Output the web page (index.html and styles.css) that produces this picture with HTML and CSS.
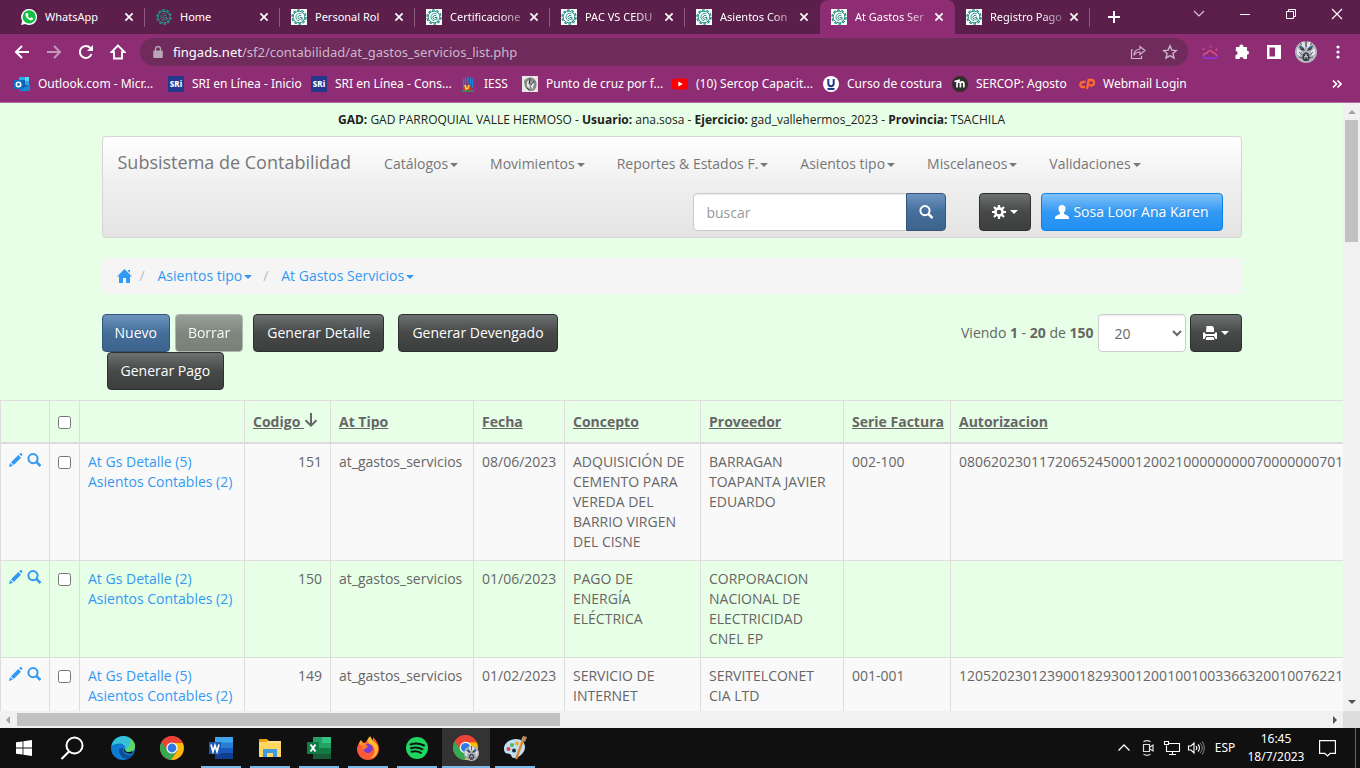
FILE: index.html
```html
<!DOCTYPE html>
<html lang="es">
<head>
<meta charset="utf-8">
<title>At Gastos Servicios</title>
<link rel="stylesheet" href="styles.css">
</head>
<body>
<svg class="defs" aria-hidden="true">
  <symbol id="gear" viewBox="0 0 16 16">
    <g fill="none" stroke="#2a9287">
      <circle cx="8" cy="8" r="7" stroke-width="1.500" stroke-dasharray="2.800 1.600"/>
      <circle cx="8" cy="8" r="5.800" stroke-width="1"/>
      <path d="M10.600 4.800C8 3.600 5.400 5 5 7.400s1.200 4.200 3.200 4.200M10.500 7a2 2 0 1 0 .2 2.400M8.600 8.500h2.400v3.200" stroke-width="1"/>
    </g>
  </symbol>
  <symbol id="x" viewBox="0 0 10 10"><path d="M1.400 1.400l7.200 7.200M8.600 1.400L1.400 8.600" stroke="currentColor" stroke-width="1.700"/></symbol>
  <symbol id="pencil" viewBox="0 0 14 14"><path fill="currentColor" d="M0 14l1.200-4 2.800 2.800zM2 9.200L9.300 2l2.700 2.700L4.800 12zM10 1.300L11 .4c.7-.6 1.200-.4 1.800.2s.9 1.300.3 1.900l-.5.6z"/></symbol>
  <symbol id="lens" viewBox="0 0 14 14"><circle cx="6" cy="5.600" r="4.600" fill="none" stroke="currentColor" stroke-width="2"/><path d="M9.300 8.800l4.200 4.200" stroke="currentColor" stroke-width="2.600"/></symbol>
  <symbol id="down" viewBox="0 0 14 14"><path d="M7 0v12M1.500 7.200L7 12.600l5.500-5.400" fill="none" stroke="currentColor" stroke-width="2"/></symbol>
  <symbol id="ball" viewBox="0 0 24 24">
    <circle cx="12" cy="12" r="12" fill="#ea4335"/>
    <path fill="#34a853" d="M1.600 6A12 12 0 0 0 11 24l6-9z"/><path fill="#fbbc05" d="M11 24A12 12 0 0 0 22.700 7H12l5.500 8z"/>
    <path fill="#ea4335" d="M1.600 6A12 12 0 0 1 22.700 7H12L7 14z"/>
    <circle cx="12" cy="12" r="5.600" fill="#fff"/><circle cx="12" cy="12" r="4.400" fill="#3178e8"/>
  </symbol>
  <symbol id="avatar" viewBox="0 0 22 22">
    <circle cx="11" cy="11" r="11" fill="#b4b7be"/>
    <path fill="#e3e5e9" d="M2 7l4 3-1 5-3-2zM20 7l-4 3 1 5 3-2zM7 1l3 1v5L7 5zM15 1l-3 1v5l3-2z"/>
    <path fill="#3a3d46" d="M4 5l4.500 2 1.500 3-4-1zM18 5l-4.500 2-1.500 3 4-1zM8 13l3-2 3 2 1 4-2 3H9l-2-3zM10.500 0h1v6h-1z"/>
    <path fill="#2f6fa5" d="M4 4l4 2-1 2zM18 4l-4 2 1 2z"/>
    <path d="M4 11l3 3M18 11l-3 3M4 16l3 1M18 16l-3 1M5 2l2 2M17 2l-2 2" stroke="#60646f"/><path d="M9.500 18l1.500-5 1.500 5M9 15.500h4" fill="none" stroke="#ccc" stroke-width=".8"/>
  </symbol>
</svg>

<header class="browser">
  <div class="tabstrip">
    <div class="tab"><svg class="fav" viewBox="0 0 16 16"><path fill="#fff" d="M0 16l1.200-4A8 8 0 1 1 4.300 15z"/><circle cx="8.200" cy="7.900" r="6.600" fill="#12c143"/><path fill="#fff" d="M5.500 4l1.300.1.700 1.900-.7.900c.6 1.100 1.300 1.800 2.500 2.400l.9-1 1.900.9c0 1.500-1.200 2.200-2.400 2-2.600-.5-4.900-2.900-5.200-5 0-1 .4-1.800 1-2.200z"/></svg><span class="tab-name">WhatsApp</span><button class="tab-x" aria-label="Cerrar"><svg><use href="#x"/></svg></button></div>
    <div class="tab"><svg class="fav"><use href="#gear"/></svg><span class="tab-name">Home</span><button class="tab-x" aria-label="Cerrar"><svg><use href="#x"/></svg></button></div>
    <div class="tab"><svg class="fav lit"><use href="#gear"/></svg><span class="tab-name">Personal Rol</span><button class="tab-x" aria-label="Cerrar"><svg><use href="#x"/></svg></button></div>
    <div class="tab"><svg class="fav lit"><use href="#gear"/></svg><span class="tab-name fade">Certificacione</span><button class="tab-x" aria-label="Cerrar"><svg><use href="#x"/></svg></button></div>
    <div class="tab"><svg class="fav lit"><use href="#gear"/></svg><span class="tab-name fade">PAC VS CEDU</span><button class="tab-x" aria-label="Cerrar"><svg><use href="#x"/></svg></button></div>
    <div class="tab last"><svg class="fav lit"><use href="#gear"/></svg><span class="tab-name fade">Asientos Con</span><button class="tab-x" aria-label="Cerrar"><svg><use href="#x"/></svg></button></div>
    <div class="tab active"><svg class="fav lit"><use href="#gear"/></svg><span class="tab-name fade">At Gastos Ser</span><button class="tab-x" aria-label="Cerrar"><svg><use href="#x"/></svg></button></div>
    <div class="tab"><svg class="fav lit"><use href="#gear"/></svg><span class="tab-name fade">Registro Pago</span><button class="tab-x" aria-label="Cerrar"><svg><use href="#x"/></svg></button></div>
    <button class="newtab" aria-label="Nueva pestaña"><svg viewBox="0 0 12 12"><path d="M6 0v12M0 6h12" stroke="#fff" stroke-width="2"/></svg></button>
    <div class="winctl">
      <button aria-label="Buscar pestañas"><svg viewBox="0 0 12 12"><path d="M1 3l5 5 5-5" fill="none" stroke="#d9c6d5" stroke-width="1.200"/></svg></button>
      <button aria-label="Minimizar"><svg viewBox="0 0 12 12"><path d="M1 6.500h10" stroke="#fff"/></svg></button>
      <button aria-label="Restaurar"><svg viewBox="0 0 12 12"><path d="M1.500 3.500h7v7h-7zM3.500 3.500v-2h7v7h-2" fill="none" stroke="#fff"/></svg></button>
      <button aria-label="Cerrar ventana"><svg viewBox="0 0 12 12"><path d="M1 1l10 10M11 1L1 11" stroke="#fff" stroke-width="1.100"/></svg></button>
    </div>
  </div>
  <div class="toolbar">
    <button aria-label="Atrás"><svg viewBox="0 0 16 16"><path d="M15 8H2M8 2L2 8l6 6" fill="none" stroke="#fff" stroke-width="2"/></svg></button>
    <button class="dim" aria-label="Adelante"><svg viewBox="0 0 16 16"><path d="M1 8h13M8 2l6 6-6 6" fill="none" stroke="#fff" stroke-width="2"/></svg></button>
    <button aria-label="Recargar"><svg viewBox="0 0 16 16"><path d="M13.500 10A6 6 0 1 1 12.400 4" fill="none" stroke="#fff" stroke-width="2"/><path fill="#fff" d="M15 1v6H9z"/></svg></button>
    <button aria-label="Inicio"><svg viewBox="0 0 16 16"><path d="M8 1.500L1.500 8H4v6.500h8V8h2.500z" fill="none" stroke="#fff" stroke-width="1.900"/></svg></button>
    <div class="omnibox">
      <svg class="lock" viewBox="0 0 10 12"><path fill="#b9a6b6" d="M1 4.500h8a.8.800 0 0 1 .8.800V11a1 1 0 0 1-1 1H1.200a1 1 0 0 1-1-1V5.300A.8.800 0 0 1 1 4.500z"/><path d="M2.500 5V3a2.500 2.500 0 0 1 5 0v2" fill="none" stroke="#b9a6b6" stroke-width="1.400"/></svg>
      <span class="url"><b>fingads.net</b>/sf2/contabilidad/at_gastos_servicios_list.php</span>
      <button aria-label="Compartir"><svg viewBox="0 0 16 16"><path d="M3 6H1.500v8.500h10V12M10 2.500L15 6.500l-5 4V8C7 8 5 9 4 11.500 4 8 6 5.300 10 5z" fill="none" stroke="#cdb6ca" stroke-width="1.200"/></svg></button>
      <button aria-label="Favorito"><svg viewBox="0 0 16 16"><path d="M8 1.800l1.800 4.300 4.600.4-3.500 3 1.100 4.500-4-2.400L4 14l1.100-4.500-3.500-3 4.600-.4z" fill="none" stroke="#cdb6ca" stroke-width="1.400"/></svg></button>
    </div>
    <button aria-label="Extensión"><svg viewBox="0 0 16 16"><path d="M1.500 12c0-2 1.500-3 4-3 .5-3 4-3 5-.5 1.500-.3 2.500.5 2.700 1.700 1 .3 1.600 1 1.500 1.800" fill="none" stroke="#e8508c" stroke-width="1.300"/><path d="M1.500 11.500c-.3 1.500.5 2.700 1.800 2.700h9.900c1.200 0 1.900-1.200 1.500-2.500" fill="none" stroke="#8b35e6" stroke-width="1.600"/><circle cx="8.500" cy="2.500" r="1.300" fill="none" stroke="#b04878"/><circle cx="1.500" cy="5" r="1.100" fill="#d14b86"/><circle cx="14.500" cy="5.500" r="1.100" fill="#e0508a"/></svg></button>
    <button aria-label="Extensiones"><svg viewBox="0 0 16 16"><path fill="#fff" d="M2 3h3.500a2 2 0 1 1 3.800 0H13v3.800a2 2 0 1 1 0 4V15H9.500a2 2 0 0 0-4 0H1.500v-4a2 2 0 0 0 .2-4z"/></svg></button>
    <button aria-label="Panel lateral"><svg viewBox="0 0 16 16"><path fill="#fff" fill-rule="evenodd" d="M1 1h14v14H1zM3.500 3.500v9H9v-9z"/></svg></button>
    <button class="profile" aria-label="Perfil"><svg><use href="#avatar"/></svg></button>
    <button aria-label="Menú"><svg viewBox="0 0 16 16"><g fill="#fff"><circle cx="8" cy="3" r="1.600"/><circle cx="8" cy="8" r="1.600"/><circle cx="8" cy="13" r="1.600"/></g></svg></button>
  </div>
  <nav class="bookmarks">
    <a href="#" class="w154"><svg viewBox="0 0 16 16"><path fill="#28a8ea" d="M5 1h10v8H5z"/><path fill="#0f5ea8" d="M5 4h6v8H5z"/><path fill="#50d9ff" d="M11 1h4v4h-4z"/><path fill="#1588d8" d="M4 15l12-7v6a1 1 0 0 1-1 1z"/><path fill="#0a6fc7" d="M0 4h9v9H0z"/><circle cx="4.500" cy="8.500" r="2.200" fill="none" stroke="#fff" stroke-width="1.600"/></svg>Outlook.com - Micr...</a>
    <a href="#" class="w143"><span class="sri">SRi</span>SRI en Línea - Inicio</a>
    <a href="#" class="w149"><span class="sri">SRi</span>SRI en Línea - Cons...</a>
    <a href="#" class="w62"><svg viewBox="0 0 16 16"><path d="M3.500 3v9M5.500 1.500V9M8 .5V8M10.500 1.500V9M12.500 3v9" stroke="#1786d8" stroke-width="1.300"/><path d="M2 15h12" stroke="#18a34a" stroke-width="1.500"/><path d="M5 9l1.500 5M9 9l-1 4" stroke="#f6d11c" stroke-width="2"/><path d="M10 11v4M4 12v3" stroke="#e0343f" stroke-width="1.600"/></svg>IESS</a>
    <a href="#" class="w150"><svg viewBox="0 0 16 16"><path fill="#e9e9e4" d="M0 0h16v16H0z"/><path fill="#888" d="M2 5c2-3 7-5 10-2 3 2 3 6 2 9l-3 3H7L3 11z"/><path fill="#eee" d="M5 6l3-3-1 4 1 6-3-3zM10 5l2 3-2 6-1-5z"/><path d="M8 2l-1 6M12 5l-3 4M5 12l2 2" stroke="#333"/></svg>Punto de cruz por f...</a>
    <a href="#" class="w151"><svg viewBox="0 0 16 16"><rect y="2.500" width="16" height="11" rx="2.500" fill="#f00"/><path fill="#fff" d="M6.300 5.500l4.500 2.500-4.500 2.500z"/></svg>(10) Sercop Capacit...</a>
    <a href="#" class="w129"><svg viewBox="0 0 16 16"><circle cx="8" cy="8" r="8" fill="#fff"/><path d="M5.300 3v4.500a2.700 2.700 0 0 0 5.400 0V3M4.500 13h7" fill="none" stroke="#23378f" stroke-width="2"/></svg>Curso de costura</a>
    <a href="#" class="w127"><svg viewBox="0 0 16 16"><circle cx="8" cy="8" r="8" fill="#2e2e2e"/><path d="M5 11.500V7.500a1.700 1.700 0 0 1 3.400 0v4V7.500a1.700 1.700 0 0 1 3.400 0v4M2.500 5.500L8 4" fill="none" stroke="#fff" stroke-width="1.700"/></svg>SERCOP: Agosto</a>
    <a href="#"><svg viewBox="0 0 16 16"><path d="M6.500 6H3.800a2.500 2.500 0 0 0 0 5H6M8 13L9.700 4h2.800a2.500 2.500 0 0 1 0 5.300h-2.300" fill="none" stroke="#ff6c2c" stroke-width="2.300"/></svg>Webmail Login</a>
    <button class="more" aria-label="Más marcadores"><svg viewBox="0 0 10 10"><path d="M1 1.500L4.500 5 1 8.500M5.500 1.500L9 5 5.500 8.500" fill="none" stroke="#fff" stroke-width="1.700"/></svg></button>
  </nav>
</header>

<div class="view">
  <main class="page">
    <p class="info"><b>GAD:</b> GAD PARROQUIAL VALLE HERMOSO - <b>Usuario:</b> ana.sosa - <b>Ejercicio:</b> gad_vallehermos_2023 - <b>Provincia:</b> TSACHILA</p>
    <div class="container">
      <nav class="navbar">
        <div class="menu">
          <a href="#" class="brand">Subsistema de Contabilidad</a>
          <a href="#">Catálogos<i class="caret"></i></a>
          <a href="#">Movimientos<i class="caret"></i></a>
          <a href="#">Reportes &amp; Estados F.<i class="caret"></i></a>
          <a href="#">Asientos tipo<i class="caret"></i></a>
          <a href="#">Miscelaneos<i class="caret"></i></a>
          <a href="#">Validaciones<i class="caret"></i></a>
        </div>
        <form class="tools">
          <div class="search"><input type="text" placeholder="buscar" aria-label="buscar"><button type="button" class="btn primary" aria-label="Buscar"><svg class="ic"><use href="#lens"/></svg></button></div>
          <button type="button" class="btn" aria-label="Opciones"><svg class="ic" viewBox="0 0 14 14"><circle cx="7" cy="7" r="3.600" fill="none" stroke="#fff" stroke-width="2.600"/><path d="M7 0v3M7 11v3M0 7h3M11 7h3M2 2l2 2M10 10l2 2M2 12l2-2M10 4l2-2" stroke="#fff" stroke-width="2.200"/></svg> <i class="caret"></i></button>
          <button type="button" class="btn blue"><svg class="ic" viewBox="0 0 14 14"><path fill="#fff" d="M7 0c2.200 0 3.500 1.400 3.500 3.500 0 1.700-.6 3.200-1.500 4v1.300c0 .5 3.200 1.300 4.400 2.400.5.500.6 1.400.6 2.800H0c0-1.400.1-2.300.6-2.800C1.800 10.100 5 9.300 5 8.800V7.500c-.9-.8-1.500-2.300-1.500-4C3.500 1.400 4.800 0 7 0z"/></svg> Sosa Loor Ana Karen</button>
        </form>
      </nav>
      <nav class="crumbs">
        <a href="#" aria-label="Inicio"><svg class="home" viewBox="0 0 15 14"><path fill="currentColor" d="M7.500 0L15 7.400h-2V14H9V9H6v5H2V7.400H0zM11 1h2v3l-2-2z"/></svg></a><i class="sep">/</i>
        <a href="#">Asientos tipo<i class="caret"></i></a><i class="sep">/</i>
        <a href="#">At Gastos Servicios<i class="caret"></i></a>
      </nav>
      <div class="actions">
        <div class="left">
          <div class="line"><button class="btn primary">Nuevo</button><button class="btn off" disabled>Borrar</button><button class="btn gen">Generar Detalle</button><button class="btn gen">Generar Devengado</button></div>
          <div class="line"><button class="btn gen">Generar Pago</button></div>
        </div>
        <div class="right">
          <span class="count">Viendo <b>1</b> - <b>20</b> de <b>150</b></span>
          <select aria-label="Registros por página"><option>20</option></select>
          <button class="btn" aria-label="Imprimir"><svg class="ic" viewBox="0 0 14 14"><path fill="#fff" d="M3.500 0h6L11 2v4H3zM0 6.500h2.200V8h9.600V6.500H14V13h-1.500l-1.500-3H3l-1.500 3H0zM3.500 11h7l1 3h-9z"/></svg> <i class="caret"></i></button>
        </div>
      </div>
    </div>
    <table class="grid">
      <colgroup><col class="c49"><col class="c30"><col class="c165"><col class="c86"><col class="c143"><col class="c91"><col class="c136"><col class="c143"><col class="c107"><col></colgroup>
      <thead><tr><th></th><th><input type="checkbox" aria-label="Seleccionar todo"></th><th></th><th class="code"><a href="#">Codigo </a><svg class="ic"><use href="#down"/></svg></th><th><a href="#">At Tipo</a></th><th><a href="#">Fecha</a></th><th><a href="#">Concepto</a></th><th><a href="#">Proveedor</a></th><th><a href="#">Serie Factura</a></th><th><a href="#">Autorizacion</a></th></tr></thead>
      <tbody>
        <tr><td class="icons"><a href="#" aria-label="Editar"><svg class="ic"><use href="#pencil"/></svg></a><a href="#" aria-label="Ver"><svg class="ic"><use href="#lens"/></svg></a></td><td><input type="checkbox" aria-label="Seleccionar 151"></td><td><a href="#">At Gs Detalle (5)</a><br><a href="#">Asientos Contables (2)</a></td><td class="num">151</td><td>at_gastos_servicios</td><td>08/06/2023</td><td>ADQUISICIÓN DE CEMENTO PARA VEREDA DEL BARRIO VIRGEN DEL CISNE</td><td>BARRAGAN TOAPANTA JAVIER EDUARDO</td><td>002-100</td><td>080620230117206524500012002100000000070000000701</td></tr>
        <tr><td class="icons"><a href="#" aria-label="Editar"><svg class="ic"><use href="#pencil"/></svg></a><a href="#" aria-label="Ver"><svg class="ic"><use href="#lens"/></svg></a></td><td><input type="checkbox" aria-label="Seleccionar 150"></td><td><a href="#">At Gs Detalle (2)</a><br><a href="#">Asientos Contables (2)</a></td><td class="num">150</td><td>at_gastos_servicios</td><td>01/06/2023</td><td>PAGO DE ENERGÍA ELÉCTRICA</td><td>CORPORACION NACIONAL DE ELECTRICIDAD CNEL EP</td><td></td><td></td></tr>
        <tr class="tall"><td class="icons"><a href="#" aria-label="Editar"><svg class="ic"><use href="#pencil"/></svg></a><a href="#" aria-label="Ver"><svg class="ic"><use href="#lens"/></svg></a></td><td><input type="checkbox" aria-label="Seleccionar 149"></td><td><a href="#">At Gs Detalle (5)</a><br><a href="#">Asientos Contables (2)</a></td><td class="num">149</td><td>at_gastos_servicios</td><td>01/02/2023</td><td>SERVICIO DE INTERNET</td><td>SERVITELCONET CIA LTD</td><td>001-001</td><td>120520230123900182930012001001003366320010076221</td></tr>
      </tbody>
    </table>
  </main>
  <div class="vbar"><i class="arrow up"></i><div class="vthumb"></div><i class="arrow dn"></i></div>
  <div class="hbar"><i class="arrow lf"></i><div class="hthumb"></div><i class="arrow rt"></i></div>
  <div class="corner"></div>
</div>

<footer class="taskbar">
  <button class="task" aria-label="Inicio"><svg class="s16" viewBox="0 0 16 16"><path fill="#fff" d="M0 2.300L6.600 1.400v6.200H0zM7.400 1.300L16 0v7.600H7.400zM0 8.400h6.600v6.200L0 13.700zM7.400 8.400H16V16l-8.600-1.300z"/></svg></button>
  <button class="task search-t" aria-label="Buscar"><svg viewBox="0 0 24 24"><circle cx="14.500" cy="9.500" r="8" fill="none" stroke="#fff" stroke-width="2"/><path d="M9 15.500L1.500 23" stroke="#fff" stroke-width="2.200"/></svg></button>
  <button class="task" aria-label="Edge"><svg viewBox="0 0 24 24"><circle cx="12" cy="12" r="12" fill="#0f7ad1"/><path fill="#35c1d8" d="M.5 10C2 3.500 7 0 12.500 0c6 0 11 4.500 11.500 10 .2 4-3 6-6.500 6-2.500 0-4-1-3.500-2.200C15 10 12 7.500 8.500 7.500 5 7.500 2 8.500.5 10z"/><path fill="#5ed669" d="M19 2.300c3.500 2.200 5 5.200 5 7.700 0 4-3 6-6.500 6-2.500 0-4-1-3.500-2.200 3-2 6.500-5 5-11.500z"/><path fill="#0c4f98" d="M8 14c0 5 4 9 9 9 2-.8 4-2.500 5-4.500-5 2-10 0-10-5.500 0-1-4-1.500-4 1z"/><path fill="#111" d="M13 13.500c0 3 4 4.500 8 4 1 0 .5-1 0-2.200-3 1.500-7 .7-7-1.800z"/></svg></button>
  <button class="task" aria-label="Chrome"><svg><use href="#ball"/></svg></button>
  <button class="task run" aria-label="Word"><svg viewBox="0 0 24 24"><path fill="#41a5ee" d="M6 1h18v6H6z"/><path fill="#2b7cd3" d="M6 6.500h18V12H6z"/><path fill="#185abd" d="M6 12h18v5.500H6z"/><path fill="#103f91" d="M6 17.500h18V23H6z"/><path fill="#1c59b5" d="M0 6h12v12H0z"/><path d="M2 8.500l2 7 2-6 2 6 2-7" fill="none" stroke="#fff" stroke-width="1.700"/></svg></button>
  <button class="task run" aria-label="Explorador"><svg viewBox="0 0 24 24"><path fill="#e8a30c" d="M1 3h8l2 2v3H1z"/><path fill="#ffd65e" d="M1 6h22v15H1z"/><path fill="#f9e08e" d="M9 5h14v2H9z"/><path fill="#3d9be0" d="M5 13h14v8h-4v-4H9v4H5z"/></svg></button>
  <button class="task run" aria-label="Excel"><svg viewBox="0 0 24 24"><path fill="#21a366" d="M6 1h18v22H6z"/><path fill="#33c481" d="M15 1h9v6h-9z"/><path fill="#107c41" d="M6 12h18v5.500H6z"/><path fill="#185c37" d="M6 17.500h18V23H6z"/><path fill="#107c41" d="M0 6h12v12H0z"/><path d="M3.500 8.500l5 7M8.500 8.500l-5 7" stroke="#fff" stroke-width="1.900"/></svg></button>
  <button class="task run" aria-label="Firefox"><svg viewBox="0 0 24 24"><path fill="#ff5a36" d="M3 7l2-3 2 3 3-1 3-5 3 4c1-1 1-3 1-4 4 4 6 8 6 12a11 11 0 0 1-22 0c0-2 1-4 2-6z"/><path fill="#ffbd2e" d="M11 5l3-5 3 5c5 3 6 7 4 12-1 3-4 5-7 5 5-3 6-8 3-12-2-2-4-2-6-5z"/><path fill="#ff9a2a" d="M3 7l2-3 2 3 4 1-2 3H6z"/><circle cx="12" cy="12.500" r="4.600" fill="#7a3bd8"/><path fill="#ff7a2f" d="M6 9c3-1 5 0 6 2-1 1-3 1-4 3-2-1-3-3-2-5z"/></svg></button>
  <button class="task run" aria-label="Spotify"><svg viewBox="0 0 24 24"><circle cx="12" cy="12" r="11" fill="#1ed760"/><path d="M5.500 8.500c4.500-1.500 9.500-1 13.500 1M6 12.300c4-1.200 8-.8 11.500 1M6.500 15.800c3.500-1 6.500-.6 9.500 1" fill="none" stroke="#111" stroke-width="2" stroke-linecap="round"/></svg></button>
  <button class="task run on" aria-label="Chrome, perfil"><svg viewBox="0 0 26 26"><use href="#ball" width="25" height="25"/><use href="#avatar" x="11" y="11" width="15" height="15"/></svg></button>
  <button class="task run" aria-label="Paint"><svg viewBox="0 0 24 24"><path fill="#bfe0f2" d="M1 13C1 7 7 3 13 3c5 0 9 3 9 8 0 6-6 11-11 11-3 0-2-3-4-4-2-.5-6 0-6-5z"/><circle cx="5.500" cy="13" r="2" fill="#e2483d"/><circle cx="9" cy="9" r="2" fill="#54b948"/><circle cx="14" cy="7.500" r="2" fill="#f5a623"/><circle cx="11" cy="14.500" r="2" fill="#182c3c"/><path d="M20 4l-7 19" stroke="#d98a2d" stroke-width="2.400"/><path fill="#b98b64" d="M18 4l2-4 4 1-2 5z"/></svg></button>
  <div class="tray">
    <svg class="t24" viewBox="0 0 16 16"><path d="M2.500 10.500L8 5l5.500 5.500" fill="none" stroke="#fff" stroke-width="1.300"/></svg>
    <svg class="t24" viewBox="0 0 16 16"><path d="M3.500 4.500h6v7h-6zM10 7l3-2v6l-3-2M3.500 1.700c2-1.200 5-1.200 7 0M3.500 14.300c2 1.200 5 1.200 7 0" fill="none" stroke="#ddd" stroke-width="1.200"/></svg>
    <svg class="t24" viewBox="0 0 16 16"><path d="M4.500 3.500h11v8H2.500v-6M.5 1.500h4v3h-4zM8.500 11.500v3M5 14.500h7" fill="none" stroke="#fff" stroke-width="1.100"/></svg>
    <svg class="t24" viewBox="0 0 16 16"><path d="M.5 6h2.500l3-3v10l-3-3H.5zM8 6c1 1.200 1 2.800 0 4M10 4.500c2 2 2 5 0 7" fill="none" stroke="#fff" stroke-width="1.100"/><path d="M12 3c3 3 3 7 0 10M14 1.500c3 4 3 9 0 13" fill="none" stroke="#888"/></svg>
    <span class="lang">ESP</span>
    <time class="clock">16:45<br>18/7/2023</time>
    <button class="note" aria-label="Notificaciones"><svg viewBox="0 0 16 16"><path d="M.5.500h15v12h-5L8 15l-2.500-2.500h-5z" fill="none" stroke="#fff" stroke-width="1.200"/></svg></button>
  </div>
</footer>
</body>
</html>
```
FILE: styles.css
```css
* { box-sizing: border-box; }
body { margin: 0; height: 100vh; display: flex; flex-direction: column; overflow: hidden; font: 14px/20px "Open Sans", "Noto Sans", sans-serif; color: #666; background: #e6ffe6; }
a { color: #3399f3; text-decoration: none; }
button { font: inherit; border: 0; background: none; padding: 0; color: inherit; }
svg { display: block; flex: none; }
.defs { position: absolute; width: 0; height: 0; }

/* Browser window */
.browser { background: #8e2d73; color: #fff; font: 12px/16px "Noto Sans", "Open Sans", sans-serif; border-bottom: 1px solid #b06c9d; }
.tabstrip { display: flex; height: 34px; background: #5c1f4b; padding-left: 10px; }
.tab { width: 135px; flex: none; display: flex; align-items: center; padding: 0 11px; position: relative; }
.tab::after { content: ""; position: absolute; right: 0; top: 8px; width: 1px; height: 19px; background: #8c5c80; }
.tab.active { background: #8e2d73; border-radius: 8px 8px 0 0; }
.tab.active::after, .tab.last::after { display: none; }
.fav { width: 16px; height: 16px; }
.fav.lit { background: #fff; }
.tab-name { flex: 1; margin: 0 2px 0 8px; font-size: 11px; white-space: nowrap; }
.tab-name.fade { mask-image: linear-gradient(90deg, #000 65%, rgba(0,0,0,.2)); }
.tab-x svg { width: 10px; height: 10px; }
.newtab { width: 48px; display: grid; place-items: center; }
.newtab svg, .winctl svg { width: 12px; height: 12px; }
.winctl { margin-left: auto; display: flex; height: 28px; }
.winctl button { width: 46px; display: grid; place-items: center; }
.toolbar { display: flex; align-items: center; height: 36px; padding: 0 6px; }
.toolbar button { width: 32px; flex: none; display: grid; place-items: center; }
.toolbar svg { width: 16px; height: 16px; }
.toolbar .profile svg { width: 22px; height: 22px; }
.dim { opacity: .5; }
.omnibox { flex: 1; display: flex; align-items: center; height: 28px; margin: 0 6px; padding: 0 2px 0 13px; border-radius: 14px; background: #6e2b5c; }
.omnibox .lock { width: 10px; height: 12px; }
.url { flex: 1; margin-left: 10px; font-size: 13px; color: #cdb6ca; }
.url b { font-weight: 400; color: #fff; }
.bookmarks { display: flex; align-items: center; height: 32px; padding: 0 18px 4px 14px; }
.bookmarks a { display: flex; align-items: center; gap: 8px; color: #fff; white-space: nowrap; }
.bookmarks a svg { width: 16px; height: 16px; }
.sri { width: 16px; height: 16px; background: #23378f; font-size: 8px; font-weight: 800; text-align: center; }
.w154 { width: 154px; } .w143 { width: 143px; } .w149 { width: 149px; } .w62 { width: 62px; }
.w150 { width: 150px; } .w151 { width: 151px; } .w129 { width: 129px; } .w127 { width: 127px; }
.more { margin-left: auto; }
.more svg { width: 10px; height: 10px; }

/* Scrolling view */
.view { flex: 1; min-height: 0; display: grid; grid-template: minmax(0, 1fr) 17px / minmax(0, 1fr) 17px; }
.page { overflow: hidden; }
.vbar, .hbar { display: flex; align-items: center; background: #f1f1f1; padding: 7px 0; }
.vbar { flex-direction: column; }
.hbar { padding: 0 6px; }
.vthumb { width: 13px; height: 122px; margin: 6px 0 auto; background: #c1c1c1; }
.hthumb { width: 543px; height: 13px; margin: 0 auto 0 7px; background: #c1c1c1; }
.corner { background: #dcdcdc; }
.arrow { border: 4px solid transparent; width: 0; height: 0; }
.up { border-top: 0; border-bottom-color: #a3a3a3; }
.dn { border-bottom: 0; border-top-color: #505050; }
.lf { border-left: 0; border-right-color: #a3a3a3; }
.rt { border-right: 0; border-left-color: #505050; }

.info { margin: 0; padding: 8px 0; text-align: center; font-size: 12px; line-height: 17px; color: #222; white-space: nowrap; }
.container { max-width: 1140px; margin: 0 auto; }
.navbar { border: 1px solid #d5d5d5; border-radius: 4px; background: linear-gradient(#fff, #eee 50%, #e4e4e4); }
.menu { display: flex; height: 50px; align-items: center; padding-top: 4px; }
.menu a { padding: 0 16px; color: #777; white-space: nowrap; }
.menu .brand { font-size: 18px; line-height: 24px; padding: 0 17px 4px 15px; }
.caret { display: inline-block; vertical-align: middle; border: 4px solid transparent; border-top-color: currentColor; border-bottom: 0; }
.menu .caret, .crumbs .caret { margin-left: 2px; }
.tools { display: flex; justify-content: flex-end; margin: 6px 18px; }
.search { display: flex; margin-right: 33px; }
.search input { width: 214px; height: 38px; padding: 8px 12px; border: 1px solid #ccc; border-radius: 4px 0 0 4px; font: inherit; box-shadow: inset 0 1px 1px rgba(0,0,0,.08); }
.search input::placeholder { color: #999; }
.search .btn { width: 40px; border-radius: 0 4px 4px 0; margin-left: -1px; }
.btn { display: inline-flex; align-items: center; justify-content: center; gap: 4px; height: 38px; padding: 0 12px; border: 1px solid #2e2f2f; border-radius: 4px; color: #fff; white-space: nowrap; text-shadow: 0 -1px 0 rgba(0,0,0,.1); background: linear-gradient(#6d7070, #474949 50%, #3d3f3f); }
.btn.primary { border-color: #345578; background: linear-gradient(#6d94bf, #446e9b 50%, #3e648d); }
.btn.blue { margin-left: 10px; padding: 0 13px; border-color: #0e80e5; background: linear-gradient(#80c0f8, #3399f3 50%, #208ff2); }
.btn.off { margin: 0 5px; opacity: .65; border-color: #8d938d; }
.ic { width: 14px; height: 14px; }
.crumbs { display: flex; align-items: center; height: 36px; margin: 20px 0; padding: 0 15px; border-radius: 4px; background: #f5f5f5; }
.crumbs .caret { margin-right: 3px; }
.home { width: 15px; height: 14px; }
.sep { width: 26px; padding-left: 8px; color: #bbb; font-style: normal; }
.actions { display: flex; justify-content: space-between; align-items: flex-start; }
.line { display: flex; }
.gen { margin: 0 9px 0 5px; padding: 0 13px; }
.right { display: flex; align-items: center; gap: 4px; }
.right select { width: 88px; height: 38px; padding: 0 0 0 12px; border: 1px solid #ccc; border-radius: 4px; background: #fff; font: inherit; color: #666; box-shadow: inset 0 1px 1px rgba(0,0,0,.08); }

.grid { width: 1800px; margin-top: 10px; table-layout: fixed; border-collapse: collapse; }
.c49 { width: 49px; } .c30 { width: 30px; } .c165 { width: 165px; } .c86 { width: 86px; } .c143 { width: 143px; }
.c91 { width: 91px; } .c136 { width: 136px; } .c107 { width: 107px; }
.grid th, .grid td { border: 1px solid #ddd; padding: 8px; text-align: left; vertical-align: top; }
.grid th { height: 42px; padding: 10px 8px 8px; vertical-align: middle; border-bottom-width: 2px; white-space: nowrap; font-weight: 700; }
.grid th a { color: #666; text-decoration: underline; white-space: pre; }
.grid th .ic { display: inline-block; }
.grid tbody tr:nth-child(odd) { background: #f9f9f9; }
.grid .num { text-align: right; }
.grid td:nth-child(3) { white-space: nowrap; }
.grid input { display: block; margin: 4px 0 0; width: 13px; height: 13px; }
.grid th input { margin-top: 0; }
.icons a { display: inline-block; margin: 1px 4px 0 0; }
.grid .icons { white-space: nowrap; padding-right: 0; }
.tall { height: 117px; }

/* Taskbar */
.taskbar { display: flex; height: 40px; background: #101010; color: #fff; font: 12px/18px "Noto Sans", sans-serif; }
.task { width: 48px; margin-right: 1px; display: grid; place-items: center; position: relative; }
.task:first-child { margin: 0; }
.task svg { width: 24px; height: 24px; }
.task .s16 { width: 16px; height: 16px; }
.search-t { margin-right: 3px; }
.run::after { content: ""; position: absolute; left: 4px; right: 4px; bottom: 0; height: 2px; background: #76b9ed; }
.on { background: #333; }
.on::after { left: 0; right: 0; }
.on svg { width: 26px; height: 26px; }
.tray { margin-left: auto; display: flex; align-items: center; margin-right: 4px; padding-right: 19px; border-right: 1px solid #666; }
.t24 { width: 24px; height: 16px; }
.lang { width: 34px; text-align: center; }
.clock { width: 68px; text-align: center; line-height: 18px; }
.note { margin-left: 9px; }
.note svg { width: 17px; height: 17px; }
```
